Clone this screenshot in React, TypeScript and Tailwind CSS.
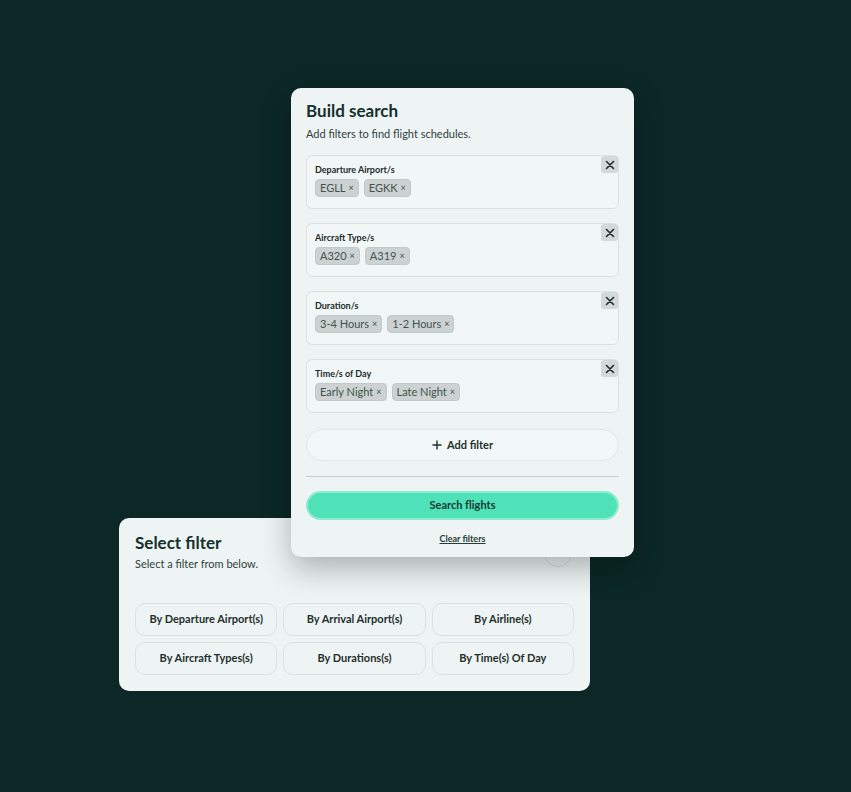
import React from 'react';

const filters = [
  { label: 'Departure Airport/s', values: ['EGLL', 'EGKK'] },
  { label: 'Aircraft Type/s', values: ['A320', 'A319'] },
  { label: 'Duration/s', values: ['3-4 Hours', '1-2 Hours'] },
  { label: 'Time/s of Day', values: ['Early Night', 'Late Night'] },
];

const options = [
  'By Departure Airport(s)',
  'By Arrival Airport(s)',
  'By Airline(s)',
  'By Aircraft Types(s)',
  'By Durations(s)',
  'By Time(s) Of Day',
];

const CloseIcon = () => (
  <svg width="10" height="10" viewBox="0 0 10 10" fill="none">
    <path d="M1.5 1.5l7 7M8.5 1.5l-7 7" stroke="#1f2d2b" strokeWidth="1.6" strokeLinecap="round" />
  </svg>
);

const FilterBox: React.FC<{ label: string; values: string[] }> = ({ label, values }) => (
  <div className="relative rounded-[6px] border border-[#dbe2e1] bg-[#f1f6f6] px-[8px] pt-[8px] pb-[11px]">
    <div className="absolute top-0 right-0 flex h-[17px] w-[17px] items-center justify-center rounded-[3px] bg-[#d2d9d8]">
      <CloseIcon />
    </div>
    <div className="text-[9px] leading-[12px] font-bold text-[#1c2a28]">{label}</div>
    <div className="mt-[3px] flex gap-[5px]">
      {values.map(v => (
        <span
          key={v}
          className="flex h-[18px] items-center gap-[3px] rounded-[4px] border border-[#c2cac9] bg-[#cbd2d1] px-[4px] text-[11px] text-[#44524f]"
        >
          {v}
          <span className="text-[9px]">×</span>
        </span>
      ))}
    </div>
  </div>
);

export default function App() {
  return (
    <div
      className="relative h-[792px] w-[851px] overflow-hidden bg-[#0b2826]"
      style={{ fontFamily: 'Lato, "Noto Sans", sans-serif' }}
    >
      {/* Select filter card (behind) */}
      <div className="absolute left-[119px] top-[518px] h-[173px] w-[471px] rounded-[10px] bg-[#eef4f4] px-[16px] pt-[14px]">
        <div className="flex items-start justify-between">
          <div>
            <div className="text-[17px] leading-[22px] font-bold text-[#14302c]">Select filter</div>
            <div className="mt-[3px] text-[11px] leading-[14px] text-[#2f403d]">Select a filter from below.</div>
          </div>
          <div className="mt-[7px] mr-[2px] h-[28px] w-[28px] rounded-full border border-[#d6dddc]" />
        </div>
        <div className="mt-[32px] grid grid-cols-3 gap-[6px]">
          {options.map(o => (
            <div
              key={o}
              className="flex h-[33px] items-center justify-center rounded-[10px] border border-[#dbe2e1] text-[11px] font-bold text-[#1f2f2c]"
            >
              {o}
            </div>
          ))}
        </div>
      </div>

      {/* Build search card */}
      <div className="absolute left-[291px] top-[88px] h-[469px] w-[343px] rounded-[10px] bg-[#eef4f4] px-[15px] pt-[12px] shadow-[0_12px_30px_rgba(0,0,0,0.28)]">
        <div className="text-[17px] leading-[22px] font-bold text-[#14302c]">Build search</div>
        <div className="mt-[5px] text-[11px] leading-[14px] text-[#2f403d]">Add filters to find flight schedules.</div>
        <div className="mt-[14px] flex flex-col gap-[14px]">
          {filters.map(f => (
            <FilterBox key={f.label} label={f.label} values={f.values} />
          ))}
        </div>
        <div className="mt-[16px] flex h-[32px] items-center justify-center gap-[5px] rounded-full border border-[#e0e7e6] bg-[#f2f7f7] text-[11px] font-bold text-[#1f2f2c]">
          <svg width="10" height="10" viewBox="0 0 10 10" fill="none">
            <path d="M5 0.5v9M0.5 5h9" stroke="#1f2f2c" strokeWidth="1.4" />
          </svg>
          Add filter
        </div>
        <div className="mt-[15px] h-px bg-[#c7cfce]" />
        <div className="mt-[14px] flex h-[29px] items-center justify-center rounded-full border-2 border-[#8ceccf] bg-[#4fe2b8] text-[11px] font-bold text-[#163a33]">
          Search flights
        </div>
        <div className="mt-[12px] text-center text-[9px] font-bold text-[#2a3a37] underline">Clear filters</div>
      </div>
    </div>
  );
}
